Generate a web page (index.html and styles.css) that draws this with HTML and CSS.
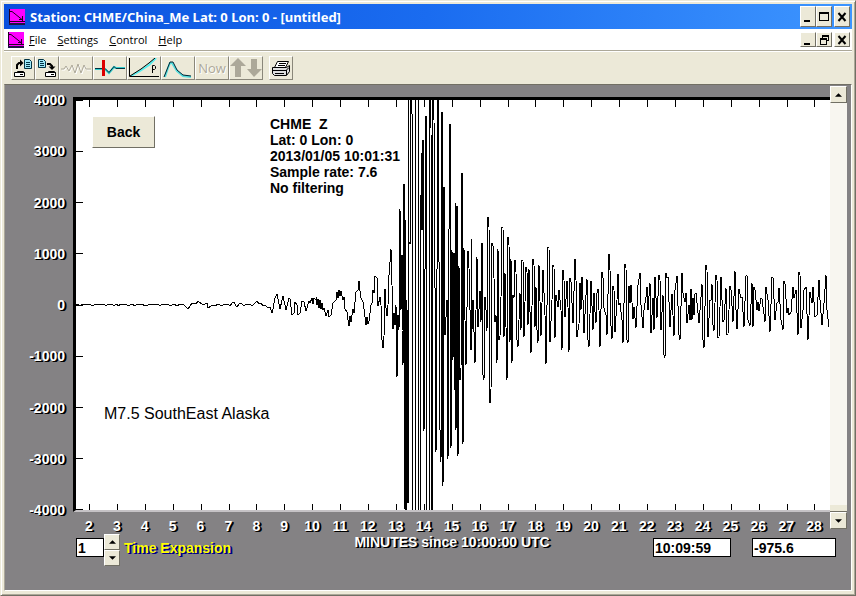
FILE: index.html
```html
<!DOCTYPE html>
<html lang="en">
<head>
<meta charset="utf-8">
<title>Station: CHME/China_Me</title>
<link rel="stylesheet" href="styles.css">
</head>
<body>
<svg class="defs" aria-hidden="true">
  <symbol id="app" viewBox="0 0 16 16">
    <path fill="#f0f" d="M0 0h16v16H0z"/>
    <path fill="#214" d="M0 14h16v2H0z"/>
    <path fill="none" stroke="#202" d="M.5 0v14M0 12.500h16M1 2.500h2l10 8M13.500 7v5M10 10.500h4"/>
  </symbol>
  <symbol id="min" viewBox="0 0 14 14"><path d="M3 10h6v2H3z"/></symbol>
  <symbol id="max" viewBox="0 0 14 14"><path fill-rule="evenodd" d="M2 2h10v9H2zM3 4v6h8V4z"/></symbol>
  <symbol id="restore" viewBox="0 0 14 14"><path fill-rule="evenodd" d="M5 2h7v6h-2v4H3V5h2zM6 4v1h4v2h1V4zM4 7v4h5V7z"/></symbol>
  <symbol id="close" viewBox="0 0 14 14"><path fill="none" stroke="#000" stroke-width="2" d="M3.500 3l7 8M10.500 3l-7 8"/></symbol>
  <symbol id="up" viewBox="0 0 8 4"><path d="M0 4h8L4 0z"/></symbol>
  <symbol id="down" viewBox="0 0 8 4"><path d="M0 0h8L4 4z"/></symbol>
</svg>
<div class="window">
  <header class="titlebar">
    <svg class="app-icon"><use href="#app"/></svg>
    <h1>Station: CHME/China_Me Lat: 0 Lon: 0 - [untitled]</h1>
    <div class="winbuttons">
      <button aria-label="Minimize"><svg><use href="#min"/></svg></button>
      <button aria-label="Maximize"><svg><use href="#max"/></svg></button>
      <button class="apart" aria-label="Close"><svg><use href="#close"/></svg></button>
    </div>
  </header>
  <nav class="menubar">
    <svg class="app-icon"><use href="#app"/></svg>
    <button class="menu"><u>F</u>ile</button>
    <button class="menu"><u>S</u>ettings</button>
    <button class="menu"><u>C</u>ontrol</button>
    <button class="menu"><u>H</u>elp</button>
    <div class="winbuttons small">
      <button aria-label="Minimize document"><svg><use href="#min"/></svg></button>
      <button aria-label="Restore document"><svg><use href="#restore"/></svg></button>
      <button class="apart" aria-label="Close document"><svg><use href="#close"/></svg></button>
    </div>
  </nav>
  <div class="toolbar">
    <button class="tool" aria-label="Open"><svg width="20" height="20" viewBox="0 0 20 20">
      <path fill="#fff" stroke="#000" d="M1.500 14.500h10v4h-10zM3.500 14.500l1-1h6l1 1"/><path stroke="#000" d="M7 16.500h3"/>
      <path fill="none" stroke="#000" stroke-width="2" d="M4 11V7l2-2h2"/><path d="M7 1.500v7L10.500 5z"/>
      <path fill="#9de8f8" stroke="#034" d="M11.500 1.500h5l2 2v7h-7z"/><path stroke="#034" d="M13 4.500h4M13 6.500h4M13 8.500h4"/></svg></button>
    <button class="tool" aria-label="Save"><svg width="20" height="20" viewBox="0 0 20 20">
      <path fill="#fff" stroke="#000" d="M8.500 14.500h10v4h-10zM10.500 14.500l1-1h6l1 1"/><path stroke="#000" d="M14 16.500h3"/>
      <path fill="none" stroke="#000" stroke-width="2" d="M10 6h3l2 2v2"/><path d="M11.500 8.500h7L15 12z"/>
      <path fill="#9de8f8" stroke="#034" d="M1.500 1.500h5l2 2v6h-7z"/><path stroke="#034" d="M3 3.500h3M3 5.500h4M3 7.500h4"/></svg></button>
    <button class="tool wide" aria-label="Waveform" disabled><svg width="30" height="20" viewBox="0 0 30 20">
      <path fill="none" stroke="#fff" d="M1 12h3l2-3 3 5 3-6 3 8 3-9 3 9 3-8 2 4h4"/>
      <path fill="none" stroke="#aca899" d="M0 11h3l2-3 3 5 3-6 3 8 3-9 3 9 3-8 2 4h5"/></svg></button>
    <button class="tool wide" aria-label="Pick arrival"><svg width="30" height="20" viewBox="0 0 30 20">
      <path fill="none" stroke="#3cc" stroke-width="2" d="M0 11h10l4 4 5-6 2 1h9"/><path fill="none" stroke="#034" d="M0 10.500h10l4 4 5-6 2 2h9"/>
      <path fill="#d00" d="M7 2h3v16H7z"/></svg></button>
    <button class="tool wide" aria-label="Travel time"><svg width="30" height="20" viewBox="0 0 30 20">
      <path fill="none" stroke="#5ee" stroke-width="2" d="M2 18l9-5 9-6 7-7"/><path fill="none" stroke="#000" d="M.5 0v18.500H30M1 18l11-7 8-6 6-5"/>
      <path fill="none" stroke="#000" d="M23.500 15V7.500h2l1 1v2l-1 1h-2"/></svg></button>
    <button class="tool wide" aria-label="Filter response"><svg width="30" height="20" viewBox="0 0 30 20">
      <path fill="none" stroke="#5dd" stroke-width="2" d="M2 19l3-9 2-5h2l5 8 6 5 8 1"/><path fill="none" stroke="#023" d="M1 19l4-10 2-5h3l4 8 6 5 8 1"/></svg></button>
    <button class="tool wide" disabled>Now</button>
    <button class="tool wide" aria-label="Previous and next" disabled><svg width="32" height="20" viewBox="0 0 32 20">
      <path fill="#aca899" d="M8 0l8 8h-5v11H5V8H0zM21 1h6v10h5l-8 8-7-8h4z"/></svg></button>
    <button class="tool apart" aria-label="Print"><svg width="20" height="20" viewBox="0 0 20 20">
      <path fill="#fff" stroke="#000" d="M6.500 3.500h11l-3 6h-11z"/><path stroke="#000" d="M8 5.500h7M7 7.500h7"/>
      <path fill="#ddd" stroke="#000" d="M1.500 9.500h14l3-2v6l-3 4h-12l-2-2z"/><path fill="none" stroke="#000" d="M2 12.500h13l3-3M15.500 12v5M4 15.500h9"/></svg></button>
  </div>
  <main class="client">
    <div class="yaxis">
      <span>4000</span><span>3000</span><span>2000</span><span>1000</span><span>0</span><span>-1000</span><span>-2000</span><span>-3000</span><span>-4000</span>
    </div>
    <section class="plot">
      <svg class="trace" viewBox="76 100 754 410" preserveAspectRatio="none" role="img" aria-label="Seismogram">
        <path d="M76 100.500h7M76 151.500h7M76 202.500h7M76 253.500h7M76 305.500h7M76 356.500h7M76 407.500h7M76 458.500h7M76 509.500h7"/>
        <path id="marks"/>
        <polyline points="76,305 78,304 80,306 82,304 83,305 85,304 87,305 89,304 91,305 93,306 95,304 97,305 99,304 102,305 104,304 106,306 108,304 110,305 112,304 114,306 116,304 119,306 120,304 122,305 124,304 126,304 128,306 130,305 133,304 134,306 136,305 138,304 140,305 142,304 145,306 148,305 150,304 152,305 154,304 156,305 158,304 160,306 162,304 164,304 166,305 168,304 170,306 172,305 174,304 177,306 180,304 184,305 188,309 192,303 196,304 198,301 203,305 207,303 208,308 211,306 213,305 215,306 218,304 220,305 222,306 224,304 226,305 228,304 230,306 232,303 234,302 236,306 237,307 239,304 241,303 244,306 246,304 248,305 250,304 252,306 254,304 257,301 259,304 261,303 263,306 265,305 268,308 270,307 272,313 273,309 275,298 277,294 278,299 280,309 283,296 286,310 289,298 290,299 292,315 294,313 295,302 297,305 298,315 300,313 302,301 304,302 306,311 309,301 310,303 312,298 313,304 314,298 316,300 316,297 317,305 318,299 319,308 320,300 321,309 322,303 323,310 324,308 326,316 328,310 329,317 331,315 333,303 336,300 337,292 338,298 339,290 340,296 341,291 343,300 344,297 345,309 347,312 348,320 349,326 350,316 351,322 353,309 354,313 356,292 358,290 359,281 360,291 361,298 363,302 364,309 366,325 367,317 368,324 369,321 371,305 372,303 373,290 374,293 375,276 377,278 378,306 380,297 381,305 382,340 383,348 384,336 385,289 386,308 387,316 388,305 389,275 391,249 392,285 393,329 394,313 395,325 396,305 397,377 398,315 399,330 400,209 401,310 402,255 402,330 403,365 404,184 405,509 405,220 406,520 406,300 407,500 408,310 408,503 409,90 410,90 410,244 411,90 412,114 412,520 415,520 415,90 418,90 418,520 420,520 421,195 421,230 422,153 422,230 423,140 423,245 424,431 426,116 427,520 429,520 430,90 431,128 432,520 433,90 434,120 436,452 438,90 440,430 441,462 442,112 443,486 444,187 445,335 447,300 448,459 449,230 450,124 451,448 452,250 453,360 454,253 455,390 455,203 456,430 457,206 458,456 459,266 460,380 461,370 462,173 463,444 464,248 465,320 466,365 468,251 469,268 471,350 471,239 472,330 473,300 475,363 477,257 478,327 480,291 481,322 482,243 483,375 484,380 485,297 486,310 487,331 488,217 489,227 490,403 491,391 492,243 493,246 494,278 495,322 496,315 497,363 498,249 499,340 500,336 501,298 502,227 503,228 504,337 505,273 507,380 508,237 509,245 510,342 511,259 512,363 513,295 514,298 515,260 516,272 517,340 518,347 520,293 521,330 522,260 523,260 524,337 526,267 527,272 528,325 529,269 531,353 533,259 534,265 535,327 536,287 537,330 538,343 539,265 541,336 543,270 545,315 546,364 548,247 549,248 550,342 552,300 553,265 554,267 555,338 556,295 558,307 559,290 561,310 562,350 563,270 564,280 565,317 567,281 568,307 569,352 570,278 571,282 573,323 575,259 576,280 577,337 579,324 580,283 581,310 582,277 583,300 584,333 586,295 587,279 588,340 589,347 591,281 593,330 594,293 595,312 596,323 597,293 598,289 599,310 600,347 602,272 603,278 604,308 606,315 607,335 609,254 610,270 611,326 612,339 613,286 614,290 615,332 617,300 618,274 619,305 620,303 622,320 623,343 625,264 626,268 627,340 628,343 629,286 630,303 631,285 633,319 634,307 636,328 638,285 640,273 641,305 643,328 644,310 646,297 647,287 648,310 650,283 651,333 653,298 654,330 655,277 657,318 659,275 660,280 661,330 663,295 664,355 665,358 666,273 667,278 668,277 670,327 672,294 674,336 675,290 677,276 679,335 680,340 682,273 683,293 685,302 686,293 687,323 689,305 690,320 691,289 692,320 693,298 694,315 695,294 696,293 698,313 699,323 702,284 703,340 704,348 706,265 707,270 708,337 710,300 711,300 712,284 713,325 714,331 716,275 717,280 718,337 719,337 721,277 723,322 724,320 726,288 727,334 728,334 730,286 731,290 733,322 735,271 736,310 737,329 739,289 741,298 742,297 744,327 746,276 747,275 748,320 750,326 752,283 753,327 754,287 755,290 757,310 758,302 759,311 761,298 762,299 765,322 766,287 768,300 770,332 772,277 773,278 775,320 777,303 778,302 779,288 781,320 783,330 784,281 785,284 787,313 788,308 789,315 791,312 793,287 794,298 796,290 798,335 799,272 800,275 801,328 803,310 804,290 806,287 808,340 810,292 812,303 813,287 815,317 817,315 819,280 820,300 822,325 824,303 826,275 827,310 829,327"/>
      </svg>
      <button class="back">Back</button>
      <pre class="info">CHME  Z
Lat: 0 Lon: 0
2013/01/05 10:01:31
Sample rate: 7.6
No filtering</pre>
      <p class="event">M7.5 SouthEast Alaska</p>
    </section>
    <div class="scrollbar">
      <button aria-label="Scroll up"><svg width="7" height="4"><use href="#up"/></svg></button>
      <div class="track"><div class="thumb"></div></div>
      <button aria-label="Scroll down"><svg width="7" height="4"><use href="#down"/></svg></button>
    </div>
    <div class="xaxis" id="xaxis"></div>
    <form class="controls">
      <div class="expansion">
        <input id="expansion" type="text" value="1">
        <div class="spin">
          <button type="button" aria-label="Increase"><svg width="7" height="4"><use href="#up"/></svg></button>
          <button type="button" aria-label="Decrease"><svg width="7" height="4"><use href="#down"/></svg></button>
        </div>
        <label for="expansion">Time Expansion</label>
      </div>
      <span class="axis-title">MINUTES since 10:00:00 UTC</span>
      <div class="readouts">
        <input class="time" type="text" value="10:09:59" aria-label="Cursor time" readonly>
        <input class="value" type="text" value="-975.6" aria-label="Cursor value" readonly>
      </div>
    </form>
  </main>
</div>
<script src="axis.js"></script>
</body>
</html>
```
FILE: axis.js
```js
// Minute labels and their tick marks along the top and bottom of the plot.
const axis = document.getElementById('xaxis');
let d = '';
for (let minute = 2; minute <= 28; minute++) {
  const label = document.createElement('span');
  label.textContent = minute;
  axis.append(label);
  const x = Math.round(89 + (minute - 2) * 27.9) + 0.5;
  d += `M${x} 100v7M${x} 504v6`;
}
document.getElementById('marks').setAttribute('d', d);
```
FILE: styles.css
```css
* { box-sizing: border-box; }
body {
  margin: 0;
  background: #ece9d8;
  color: #000;
  font: bold 14px/16px "Liberation Sans", Arial, sans-serif;
}
button, input { font: inherit; color: inherit; margin: 0; padding: 0; border-radius: 0; }
.defs { position: absolute; width: 0; height: 0; }
.window {
  display: flex;
  flex-direction: column;
  min-height: 100vh;
  padding: 3px;
  border: 1px solid #ece9d8;
  border-right-color: #716f64;
  border-bottom-color: #716f64;
  box-shadow: inset 1px 1px #fff, inset -1px -1px #aca899;
}
.app-icon { width: 16px; height: 16px; flex: none; }

.titlebar {
  display: flex;
  align-items: center;
  height: 25px;
  padding: 0 2px 0 5px;
  gap: 5px;
  background: linear-gradient(90deg, #0a50dc, #1a6cf0 50%, #3d95ff);
  color: #fff;
}
.titlebar h1 { margin: 0; font: bold 13px/16px "Noto Sans", "Open Sans", sans-serif; font-stretch: normal; white-space: nowrap; }
.winbuttons { display: flex; margin-left: auto; }
.winbuttons button, .scrollbar button, .spin button {
  display: grid;
  place-items: center;
  background: #ece9d8;
  border: 1px solid;
  border-color: #fff #716f64 #716f64 #fff;
}
.winbuttons button { width: 16px; height: 21px; }
.winbuttons .apart { margin-left: 2px; }
.winbuttons svg { width: 14px; height: 14px; }
.winbuttons.small button { height: 15px; }
.winbuttons.small svg { height: 14px; }

.menubar {
  display: flex;
  align-items: center;
  height: 22px;
  padding: 0 2px 0 4px;
  background: #fff;
  border-bottom: 1px solid #aca899;
}
.menu {
  border: 0;
  background: none;
  margin-right: 11px;
  font: 11px/16px "Open Sans", "Noto Sans", sans-serif;
}
.app-icon + .menu { margin-left: 5px; }

.toolbar {
  display: flex;
  align-items: center;
  height: 33px;
  padding: 0 7px;
  background: #ece9d8;
  border-top: 1px solid #fff;
}
.tool {
  display: grid;
  place-items: center;
  width: 24px;
  height: 24px;
  background: #ece9d8;
  border: 1px solid;
  border-color: #fff #8a877a #8a877a #fff;
  font: 13px/16px "Open Sans", "Noto Sans", sans-serif;
}
.tool:disabled { color: #aca899; text-shadow: 1px 1px #fff; }
.tool.wide { width: 34px; }
.tool.apart { margin-left: 6px; }

.client {
  flex: 1;
  display: grid;
  grid-template: 1fr 22px auto / 68px 1fr 17px;
  padding: 1px 4px 24px 0;
  background: #848284;
  border: 1px solid #ece9d8;
  border-top-color: #716f64;
  border-left-color: #aca899;
  border-bottom-color: #fff;
  border-right-color: #fff;
  margin-bottom: 1px;
}
.yaxis {
  display: flex;
  flex-direction: column;
  justify-content: space-between;
  margin: 6px 0 -6px;
  padding-right: 8px;
  text-align: right;
}
.yaxis, .xaxis, .axis-title { color: #fff; text-shadow: 1px 1px #000, 2px 1px #000; }
.plot {
  position: relative;
  margin-top: 11px;
  background: #fff;
  border: 3px solid #000;
  border-width: 3px 0 2px 3px;
  border-bottom-color: #c6c3c6;
}
.trace { display: block; position: absolute; width: 100%; height: 100%; }
.trace path, .trace polyline { fill: none; stroke: #000; stroke-width: 1px; shape-rendering: crispEdges; }
.back {
  position: absolute;
  left: 16px;
  top: 16px;
  width: 63px;
  height: 32px;
  background: #ece9d8;
  border: 1px solid;
  border-color: #fff #716f64 #716f64 #fff;
}
.info { position: absolute; left: 194px; top: 16px; margin: 0; font: inherit; }
.event { position: absolute; left: 28px; top: 306px; margin: 0; font-weight: normal; font-size: 16px; }

.scrollbar { grid-row: span 2; display: flex; flex-direction: column; margin-bottom: 5px; }
.scrollbar button { height: 17px; }
.track {
  flex: 1;
  display: flex;
  align-items: flex-end;
  background: #f8f6f0;
}
.thumb { flex: 1; height: 7px; background: #ece9d8; border-bottom: 1px solid #716f64; }

.xaxis {
  grid-column: 2;
  display: grid;
  grid-template-columns: repeat(27, 1fr);
  padding: 6px 2px 0;
  text-align: center;
}
.controls {
  grid-column: 2 / -1;
  display: flex;
  align-items: flex-start;
  justify-content: space-between;
  padding: 0 11px 0 3px;
}
.expansion { display: flex; align-items: center; }
.expansion label { margin: -4px 0 0 4px; color: #ff0; text-shadow: 1px 1px #008, 2px 1px #008; }
.axis-title { margin-left: 20px; }
.controls input {
  height: 19px;
  border: 1px solid #000;
  background: #fff;
  padding: 0 1px;
}
.expansion input { width: 28px; margin-top: -5px; }
.spin { display: grid; width: 16px; }
.spin button { height: 16px; }
.readouts { display: flex; gap: 21px; padding-top: 4px; }
.readouts .time { width: 78px; }
.readouts .value { width: 84px; }
```
